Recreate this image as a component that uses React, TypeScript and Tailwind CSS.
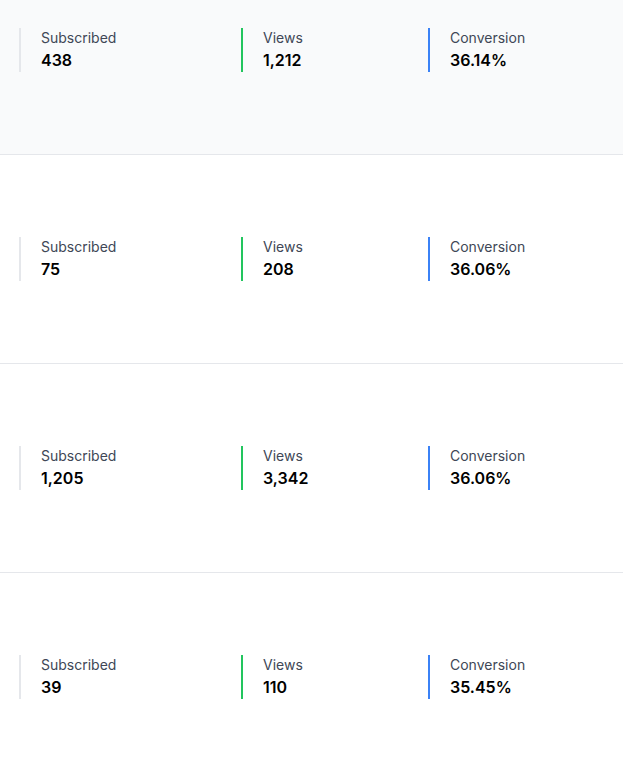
import React from "react";

type Row = { subscribed: string; views: string; conversion: string };

const rows: Row[] = [
  { subscribed: "438", views: "1,212", conversion: "36.14%" },
  { subscribed: "75", views: "208", conversion: "36.06%" },
  { subscribed: "1,205", views: "3,342", conversion: "36.06%" },
  { subscribed: "39", views: "110", conversion: "35.45%" },
];

function Stat({ label, value, border }: { label: string; value: string; border: string }) {
  return (
    <div className={`border-l-2 ${border} pl-[20px]`}>
      <div className="text-[14px] leading-[20px] text-[#404756]">{label}</div>
      <div className="text-[16px] leading-[24px] font-semibold text-black">{value}</div>
    </div>
  );
}

export default function App() {
  return (
    <div className="min-h-[760px] bg-white" style={{ fontFamily: "Inter, 'Noto Sans', sans-serif" }}>
      {rows.map((r, i) => (
        <div
          key={i}
          className={`grid grid-cols-[222px_187px_1fr] pl-[19px] border-b border-[#e5e7eb] ${
            i === 0 ? "bg-[#f9fafb] pt-[28px] pb-[82px]" : "bg-white py-[82px]"
          } ${i === rows.length - 1 ? "border-b-0" : ""}`}
        >
          <Stat label="Subscribed" value={r.subscribed} border="border-[#e5e7eb]" />
          <Stat label="Views" value={r.views} border="border-[#22c55e]" />
          <Stat label="Conversion" value={r.conversion} border="border-[#3b82f6]" />
        </div>
      ))}
    </div>
  );
}
